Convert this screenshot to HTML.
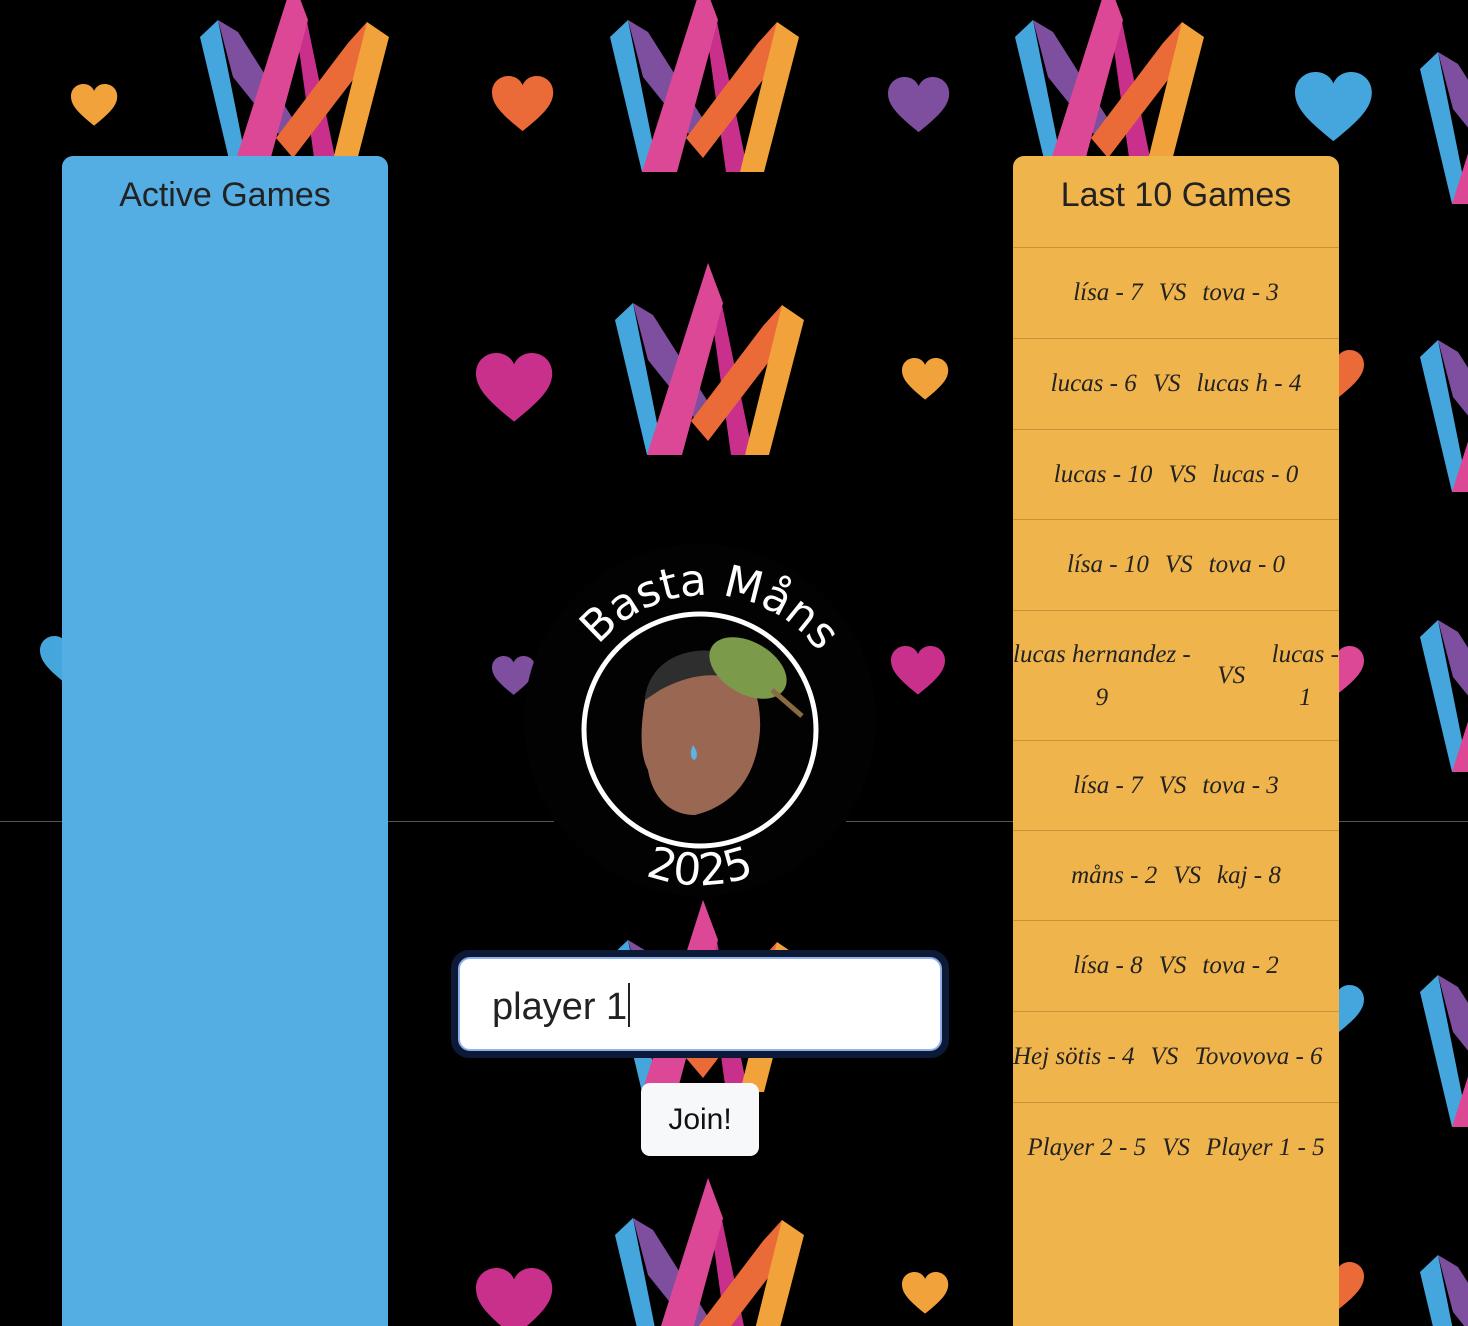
<!DOCTYPE html>
<html><head><meta charset="utf-8"><style>
*{margin:0;padding:0;box-sizing:border-box}
html,body{width:1468px;height:1326px;overflow:hidden;background:#000;position:relative;font-family:"Liberation Sans",sans-serif}
svg.bg{position:absolute;left:0;top:0}
.panel{position:absolute;top:156px;width:326px;height:1170px;border-radius:11px 11px 0 0;overflow:hidden}
.blue{left:62px;background:#55aee3}
.orange{left:1013px;background:#f0b44c}
.title{text-align:center;font-size:34px;color:#222;margin-top:20px}
.row{position:absolute;left:0;width:100%;border-top:1.5px solid #c9913a;display:flex;align-items:center;justify-content:center;font-family:"Liberation Serif",serif;font-style:italic;font-size:25px;color:#222;white-space:nowrap}
.row span{margin:0 8px}
.inp{position:absolute;left:451px;top:950px;width:498px;height:108px;border-radius:18px;background:#0c1a38}
.inp div{position:absolute;left:7px;top:7px;right:7px;bottom:7px;background:#fff;border-radius:12px;border:2px solid #8fb0e8;font-size:38px;color:#222;padding:24px 0 0 32px}
.cur{display:inline-block;width:2px;height:44px;background:#222;vertical-align:-8px;margin-left:1px}
.btn{position:absolute;left:641px;top:1083px;width:118px;height:73px;background:#f7f8f9;border-radius:9px;font-size:30px;color:#111;text-align:center;line-height:73px}
.hr{position:absolute;top:821px;height:1px;background:#555}
</style></head><body>
<svg class="bg" width="1468" height="1326" viewBox="0 0 1468 1326">
<defs>
<g id="m">
<polygon points="93,0 106,37 138,192 116,192 95,40" fill="#c9308c"/>
<polygon points="18,40 38,52 95,142 82,158 33,97" fill="#7d4f9e"/>
<polygon points="0,57 18,40 48,190 32,192" fill="#44a6dc"/>
<polygon points="93,0 108,40 67,192 32,192" fill="#dc4896"/>
<polygon points="76,158 148,63 167,42 162,88 93,178" fill="#ea6a38"/>
<polygon points="167,42 189,57 154,192 130,192" fill="#f2a23a"/>
</g>
<path id="h" d="M30 54 C10 38 0 28 0 16 C0 6 8 0 16 0 C23 0 28 4 30 9 C32 4 37 0 44 0 C52 0 60 6 60 16 C60 28 50 38 30 54Z"/>
</defs>
<use href="#m" x="200" y="-20"/>
<use href="#m" x="610" y="-20"/>
<use href="#m" x="1015" y="-20"/>
<use href="#m" x="1420" y="12"/>
<use href="#m" x="615" y="263"/>
<use href="#m" x="1420" y="300"/>
<use href="#m" x="1420" y="580"/>
<use href="#m" x="610" y="900"/>
<use href="#m" x="1420" y="935"/>
<use href="#m" x="615" y="1178"/>
<use href="#m" x="1420" y="1215"/>
<use href="#h" transform="translate(71,84) scale(0.77)" fill="#f2a23a"/>
<use href="#h" transform="translate(492,76) scale(1.02)" fill="#ea6a38"/>
<use href="#h" transform="translate(888,77) scale(1.02)" fill="#7d4f9e"/>
<use href="#h" transform="translate(1295,72) scale(1.28)" fill="#44a6dc"/>
<use href="#h" transform="translate(476,353) scale(1.27)" fill="#c9308c"/>
<use href="#h" transform="translate(902,358) scale(0.77)" fill="#f2a23a"/>
<use href="#h" transform="translate(492,656) scale(0.72)" fill="#7d4f9e"/>
<use href="#h" transform="translate(891,646) scale(0.9)" fill="#c9308c"/>
<use href="#h" transform="translate(1310,350) scale(0.9)" fill="#ea6a38"/>
<use href="#h" transform="translate(1310,646) scale(0.9)" fill="#dc4896"/>
<use href="#h" transform="translate(1310,985) scale(0.9)" fill="#44a6dc"/>
<use href="#h" transform="translate(1310,1262) scale(0.9)" fill="#ea6a38"/>
<use href="#h" transform="translate(476,1268) scale(1.27)" fill="#c9308c"/>
<use href="#h" transform="translate(902,1272) scale(0.77)" fill="#f2a23a"/>
<use href="#h" transform="translate(40,636) scale(0.9)" fill="#44a6dc"/>
<circle cx="700" cy="720" r="176" fill="#020203"/>
<circle cx="700" cy="730" r="116" fill="none" stroke="#fff" stroke-width="5"/>
<path id="arcT" d="M566 735 A140 140 0 0 1 846 735" fill="none"/>
<text font-family="DejaVu Sans,sans-serif" font-size="44" fill="#fff"><textPath href="#arcT" startOffset="51%" text-anchor="middle">Basta Måns</textPath></text>
<path id="arcB" d="M545 730 A155 155 0 0 0 855 730" fill="none"/>
<text font-family="DejaVu Sans,sans-serif" font-size="44" fill="#fff"><textPath href="#arcB" startOffset="50%" text-anchor="middle">2025</textPath></text>
<path d="M645 700 C648 665 680 650 715 655 C745 660 762 690 760 730 C757 775 735 805 695 815 C668 815 652 795 648 770 C640 755 640 730 645 700 Z" fill="#9a6852"/>
<path d="M645 700 C648 662 685 645 720 652 C742 657 756 672 762 700 C740 670 700 668 660 690 Z" fill="#2e2e2e"/>
<ellipse cx="748" cy="668" rx="42" ry="26" transform="rotate(30 748 668)" fill="#7b9a4a"/>
<line x1="772" y1="690" x2="802" y2="716" stroke="#8a6a40" stroke-width="5"/>
<path d="M693 745 C690 752 690 758 694 760 C698 758 698 752 693 745Z" fill="#5ab4ea"/>
</svg>
<div class="hr" style="left:0;width:62px"></div>
<div class="hr" style="left:388px;width:166px"></div>
<div class="hr" style="left:846px;width:167px"></div>
<div class="hr" style="left:1338px;width:130px"></div>
<div class="panel blue"><div class="title">Active Games</div></div>
<div class="panel orange"><div class="title">Last 10 Games</div>
<div class="row" style="top:91px;height:91px"><span>lísa - 7</span><span>VS</span><span>tova - 3</span></div>
<div class="row" style="top:182px;height:91px"><span>lucas - 6</span><span>VS</span><span>lucas h - 4</span></div>
<div class="row" style="top:273px;height:90px"><span>lucas - 10</span><span>VS</span><span>lucas - 0</span></div>
<div class="row" style="top:363px;height:91px"><span>lísa - 10</span><span>VS</span><span>tova - 0</span></div>
<div class="row" style="top:454px;height:130px;justify-content:space-between"><span style="margin:0;text-align:center;line-height:43px">lucas hernandez -<br>9</span><span style="margin:0">VS</span><span style="margin:0;text-align:center;line-height:43px">lucas -<br>1</span></div>
<div class="row" style="top:584px;height:90px"><span>lísa - 7</span><span>VS</span><span>tova - 3</span></div>
<div class="row" style="top:674px;height:90px"><span>måns - 2</span><span>VS</span><span>kaj - 8</span></div>
<div class="row" style="top:764px;height:91px"><span>lísa - 8</span><span>VS</span><span>tova - 2</span></div>
<div class="row" style="top:855px;height:91px;justify-content:flex-start"><span style="margin:0 8px 0 0">Hej sötis - 4</span><span>VS</span><span>Tovovova - 6</span></div>
<div class="row" style="top:946px;height:91px"><span>Player 2 - 5</span><span>VS</span><span>Player 1 - 5</span></div>
</div>
<div class="inp"><div>player 1<span class="cur"></span></div></div>
<div class="btn">Join!</div>
</body></html>
